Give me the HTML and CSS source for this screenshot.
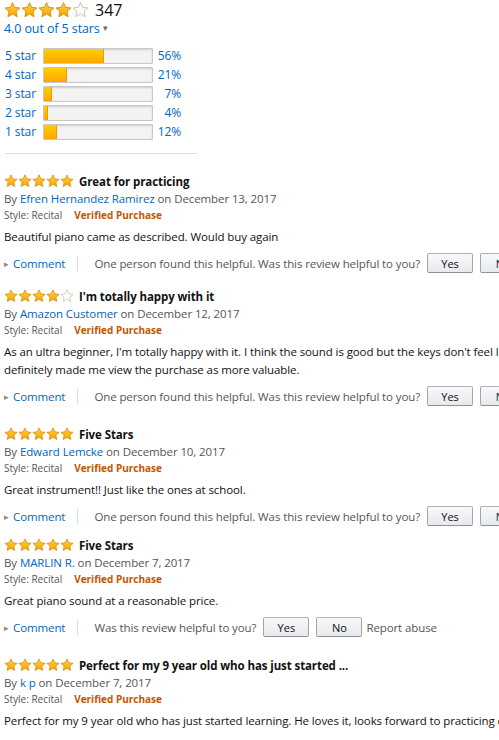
FILE: index.html
```html
<!DOCTYPE html>
<html lang="en">
<head>
  <meta charset="UTF-8">
  <title>Customer reviews</title>
  <meta name="viewport" content="width=device-width, initial-scale=1.0">
  <link rel="stylesheet" href="styles.css">
</head>
<body>
  <svg width="0" height="0" class="defs">
    <defs>
      <linearGradient id="gold" x1="0" y1="0" x2="0" y2="1">
        <stop offset="0" stop-color="#ffd24a"/>
        <stop offset="1" stop-color="#f5a500"/>
      </linearGradient>
      <symbol id="star" viewBox="0 0 24 24">
        <path d="M12 1.6l3.05 6.7 7.35.85-5.45 5 1.5 7.25L12 17.75 5.55 21.4l1.5-7.25-5.45-5 7.35-.85z" fill="url(#gold)" stroke="#d98a00" stroke-width="1.3" stroke-linejoin="round"/>
      </symbol>
      <symbol id="star-empty" viewBox="0 0 24 24">
        <path d="M12 1.6l3.05 6.7 7.35.85-5.45 5 1.5 7.25L12 17.75 5.55 21.4l1.5-7.25-5.45-5 7.35-.85z" fill="#fff" stroke="#c9bfa8" stroke-width="1.3" stroke-linejoin="round"/>
      </symbol>
    </defs>
  </svg>

  <!-- Resumo das notas -->
  <div class="summary">
    <div class="summary-top">
      <span class="stars stars-lg">
        <svg><use href="#star"/></svg><svg><use href="#star"/></svg><svg><use href="#star"/></svg><svg><use href="#star"/></svg><svg><use href="#star-empty"/></svg>
      </span>
      <span class="total">347</span>
    </div>
    <a class="link average" href="#">4.0 out of 5 stars <span class="caret">&#9662;</span></a>

    <table class="histogram">
      <tr>
        <td class="hist-label"><a class="link" href="#">5 star</a></td>
        <td><div class="bar"><div class="fill" style="width:56%"></div></div></td>
        <td class="hist-pct"><a class="link" href="#">56%</a></td>
      </tr>
      <tr>
        <td class="hist-label"><a class="link" href="#">4 star</a></td>
        <td><div class="bar"><div class="fill" style="width:21%"></div></div></td>
        <td class="hist-pct"><a class="link" href="#">21%</a></td>
      </tr>
      <tr>
        <td class="hist-label"><a class="link" href="#">3 star</a></td>
        <td><div class="bar"><div class="fill" style="width:7%"></div></div></td>
        <td class="hist-pct"><a class="link" href="#">7%</a></td>
      </tr>
      <tr>
        <td class="hist-label"><a class="link" href="#">2 star</a></td>
        <td><div class="bar"><div class="fill" style="width:4%"></div></div></td>
        <td class="hist-pct"><a class="link" href="#">4%</a></td>
      </tr>
      <tr>
        <td class="hist-label"><a class="link" href="#">1 star</a></td>
        <td><div class="bar"><div class="fill" style="width:12%"></div></div></td>
        <td class="hist-pct"><a class="link" href="#">12%</a></td>
      </tr>
    </table>
  </div>

  <hr class="divider">

  <!-- Lista de avaliações -->
  <div class="reviews">
    <div class="review">
      <div class="review-title">
        <span class="stars"><svg><use href="#star"/></svg><svg><use href="#star"/></svg><svg><use href="#star"/></svg><svg><use href="#star"/></svg><svg><use href="#star"/></svg></span>
        <b>Great for practicing</b>
      </div>
      <div class="byline">By <a class="link" href="#">Efren Hernandez Ramirez</a> on December 13, 2017</div>
      <div class="meta"><span class="style-name">Style: Recital</span><span class="verified">Verified Purchase</span></div>
      <p class="review-body">Beautiful piano came as described. Would buy again</p>
      <div class="actions">
        <span class="arrow">&#9656;</span><a class="link" href="#">Comment</a><span class="sep"></span>
        <span class="helpful">One person found this helpful. Was this review helpful to you?</span>
        <button>Yes</button><button>No</button>
      </div>
    </div>

    <div class="review review-wide">
      <div class="review-title">
        <span class="stars"><svg><use href="#star"/></svg><svg><use href="#star"/></svg><svg><use href="#star"/></svg><svg><use href="#star"/></svg><svg><use href="#star-empty"/></svg></span>
        <b>I'm totally happy with it</b>
      </div>
      <div class="byline">By <a class="link" href="#">Amazon Customer</a> on December 12, 2017</div>
      <div class="meta"><span class="style-name">Style: Recital</span><span class="verified">Verified Purchase</span></div>
      <p class="review-body">As an ultra beginner, I'm totally happy with it. I think the sound is good but the keys don't feel like a real piano, still<br>definitely made me view the purchase as more valuable.</p>
      <div class="actions">
        <span class="arrow">&#9656;</span><a class="link" href="#">Comment</a><span class="sep"></span>
        <span class="helpful">One person found this helpful. Was this review helpful to you?</span>
        <button>Yes</button><button>No</button>
      </div>
    </div>

    <div class="review review-narrow">
      <div class="review-title">
        <span class="stars"><svg><use href="#star"/></svg><svg><use href="#star"/></svg><svg><use href="#star"/></svg><svg><use href="#star"/></svg><svg><use href="#star"/></svg></span>
        <b>Five Stars</b>
      </div>
      <div class="byline">By <a class="link" href="#">Edward Lemcke</a> on December 10, 2017</div>
      <div class="meta"><span class="style-name">Style: Recital</span><span class="verified">Verified Purchase</span></div>
      <p class="review-body">Great instrument!! Just like the ones at school.</p>
      <div class="actions">
        <span class="arrow">&#9656;</span><a class="link" href="#">Comment</a><span class="sep"></span>
        <span class="helpful">One person found this helpful. Was this review helpful to you?</span>
        <button>Yes</button><button>No</button>
      </div>
    </div>

    <div class="review review-wide">
      <div class="review-title">
        <span class="stars"><svg><use href="#star"/></svg><svg><use href="#star"/></svg><svg><use href="#star"/></svg><svg><use href="#star"/></svg><svg><use href="#star"/></svg></span>
        <b>Five Stars</b>
      </div>
      <div class="byline">By <a class="link" href="#">MARLIN R.</a> on December 7, 2017</div>
      <div class="meta"><span class="style-name">Style: Recital</span><span class="verified">Verified Purchase</span></div>
      <p class="review-body">Great piano sound at a reasonable price.</p>
      <div class="actions">
        <span class="arrow">&#9656;</span><a class="link" href="#">Comment</a><span class="sep"></span>
        <span class="helpful">Was this review helpful to you?</span>
        <button>Yes</button><button>No</button>
        <span class="report">Report abuse</span>
      </div>
    </div>

    <div class="review">
      <div class="review-title">
        <span class="stars"><svg><use href="#star"/></svg><svg><use href="#star"/></svg><svg><use href="#star"/></svg><svg><use href="#star"/></svg><svg><use href="#star"/></svg></span>
        <b>Perfect for my 9 year old who has just started ...</b>
      </div>
      <div class="byline">By <a class="link" href="#">k p</a> on December 7, 2017</div>
      <div class="meta"><span class="style-name">Style: Recital</span><span class="verified">Verified Purchase</span></div>
      <p class="review-body">Perfect for my 9 year old who has just started learning. He loves it, looks forward to practicing every day.</p>
    </div>
  </div>
</body>
</html>
```

FILE: styles.css
```css
* {
  box-sizing: border-box;
  margin: 0;
  padding: 0;
}

body {
  font-family: "Open Sans", Arial, sans-serif;
  font-size: 11.5px;
  letter-spacing: -0.1px;
  color: #111;
  background: #fff;
  width: 640px;
  overflow: hidden;
}

.defs {
  position: absolute;
}

.link {
  color: #0066c0;
  text-decoration: none;
}

/* Estrelas */
.stars {
  display: inline-flex;
  vertical-align: middle;
}

.stars svg {
  width: 14px;
  height: 14px;
}

.stars-lg svg {
  width: 17px;
  height: 18px;
}

/* Resumo */
.summary {
  padding: 1px 4px 0 4px;
}

.summary-top {
  display: flex;
  align-items: center;
  height: 18px;
}

.total {
  font-size: 16px;
  letter-spacing: 0;
  margin-left: 6px;
  line-height: 18px;
}

.average {
  display: inline-block;
  font-size: 12.5px;
  line-height: 18px;
}

.caret {
  color: #666;
  font-size: 9px;
  vertical-align: 2px;
}

.histogram {
  border-collapse: collapse;
  margin-top: 8px;
  font-size: 12px;
}

.histogram td {
  height: 19px;
  padding: 0;
}

.hist-label {
  width: 39px;
  padding-left: 1px !important;
}

.bar {
  width: 110px;
  height: 16px;
  background: #f3f3f3;
  border: 1px solid #c8c8c8;
  border-radius: 1px;
  box-shadow: inset 0 1px 2px rgba(0,0,0,.15);
  overflow: hidden;
}

.fill {
  height: 100%;
  background: linear-gradient(#ffce00, #ffa700);
  border-right: 1px solid #e8a000;
}

.hist-pct {
  width: 28px;
  text-align: right;
}

.divider {
  width: 192px;
  margin: 12px 0 18px 5px;
  border: none;
  border-top: 1px solid #ddd;
}

/* Avaliações */
.review {
  padding-left: 4px;
  margin-bottom: 14px;
}

.review-wide {
  margin-bottom: 19px;
}

.review-narrow {
  margin-bottom: 10px;
}

.review-title {
  display: flex;
  align-items: center;
  gap: 5px;
  height: 18px;
}

.review-title b {
  font-size: 11.5px;
}

.byline {
  line-height: 17px;
  color: #555;
}

.meta {
  font-size: 10px;
  letter-spacing: 0;
  line-height: 17px;
}

.style-name {
  color: #555;
  margin-right: 12px;
}

.verified {
  color: #c45500;
  font-weight: bold;
}

.review-body {
  margin-top: 4px;
  line-height: 18px;
  white-space: nowrap;
}

.actions {
  display: flex;
  align-items: center;
  height: 20px;
  margin-top: 7px;
  white-space: nowrap;
}

.arrow {
  color: #888;
  font-size: 9px;
  width: 9px;
}

.sep {
  width: 1px;
  height: 15px;
  background: #ddd;
  margin: 0 16px 0 12px;
}

.helpful {
  color: #555;
}

button {
  font-family: inherit;
  font-size: 11px;
  color: #111;
  width: 46px;
  height: 20px;
  margin-left: 7px;
  border: 1px solid #adb1b8;
  border-color: #adb1b8 #a2a6ac #8d9096;
  border-radius: 2px;
  background: linear-gradient(#f7f8fa, #e7e9ec);
}

.report {
  color: #555;
  margin-left: 4px;
}
```
